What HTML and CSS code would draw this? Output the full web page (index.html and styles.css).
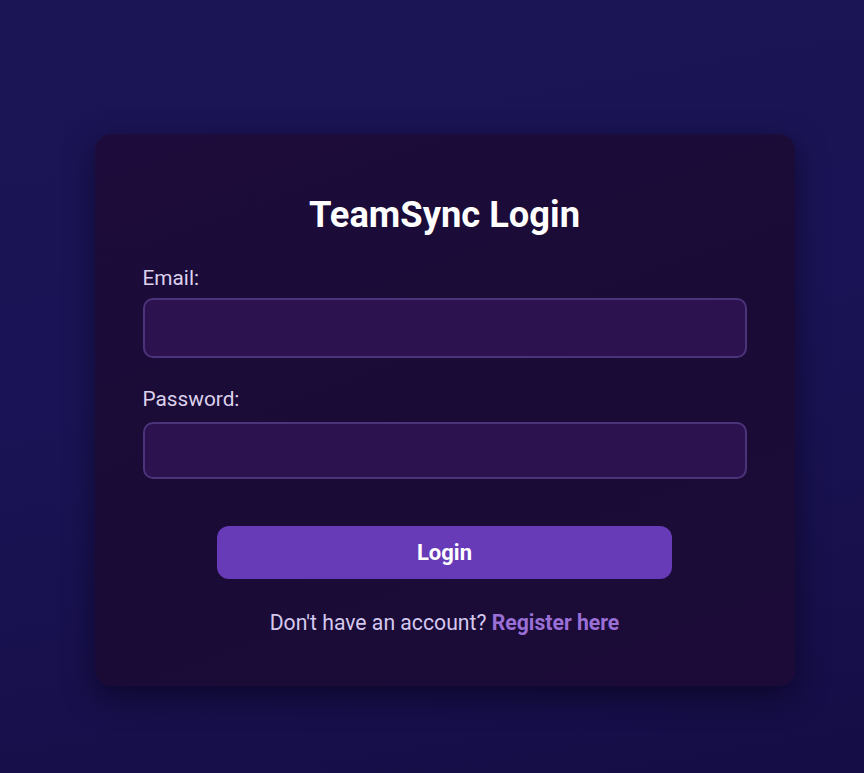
FILE: index.html
```html
<!DOCTYPE html>
<html lang="en">
<head>
<meta charset="utf-8">
<title>TeamSync Login</title>
<link rel="stylesheet" href="styles.css">
</head>
<body>
<main class="page">
  <section class="card">
    <h1 class="title">TeamSync Login</h1>
    <form class="form">
      <div class="field field-email">
        <label class="label" for="email">Email:</label>
        <input class="input input-email" id="email" type="email">
      </div>
      <div class="field field-password">
        <label class="label label-password" for="password">Password:</label>
        <input class="input input-password" id="password" type="password">
      </div>
      <button class="btn" type="button">Login</button>
    </form>
    <p class="footer">Don't have an account? <a class="link" href="#">Register here</a></p>
  </section>
</main>
</body>
</html>
```

FILE: styles.css
```css
* { box-sizing: border-box; }
html, body {
  margin: 0;
  height: 100%;
}
body {
  font-family: Roboto, "Liberation Sans", sans-serif;
  background: linear-gradient(170deg, #1b1555 0%, #1a1456 45%, #150d45 100%);
  color: #fff;
  overflow: hidden;
}
.page {
  min-height: 100vh;
  display: flex;
  justify-content: center;
  align-items: flex-start;
  padding: 134px 0 0 25px;
}
.card {
  width: 700px;
  padding: 48px 48px 51px;
  background: linear-gradient(160deg, #1d0c3b 0%, #1a0b36 50%, #1c0b38 100%);
  border-radius: 16px;
  box-shadow: 0 10px 30px rgba(5, 2, 20, 0.55);
}
.title {
  margin: 12px 0 0;
  font-size: 36.3px;
  line-height: 42px;
  font-weight: 700;
  text-align: center;
  color: #ffffff;
}
.form {
  display: flex;
  flex-direction: column;
  margin-top: 31px;
}
.field { display: flex; flex-direction: column; }
.field-email { margin-bottom: 30px; }
.label {
  font-size: 20.8px;
  line-height: 23px;
  color: #dcd2ec;
  margin-bottom: 8px;
}
.label-password { margin-bottom: 11px; }
.input {
  width: 100%;
  background: #2d1250;
  border: 2px solid #4b3479;
  border-radius: 10px;
  color: #fff;
  font: inherit;
  padding: 0 14px;
  outline: none;
}
.input-email { height: 60px; }
.input-password { height: 57px; }
.btn {
  align-self: center;
  width: 455px;
  height: 53px;
  margin-top: 47px;
  border: none;
  border-radius: 12px;
  background: #673ab7;
  color: #fff;
  font-family: inherit;
  font-size: 22px;
  font-weight: 700;
  cursor: pointer;
}
.footer {
  margin: 32px 0 0;
  text-align: center;
  font-size: 21.2px;
  line-height: 24px;
  color: #d4c8ee;
}
.link {
  color: #9a6fd6;
  font-weight: 700;
  text-decoration: none;
}
```
